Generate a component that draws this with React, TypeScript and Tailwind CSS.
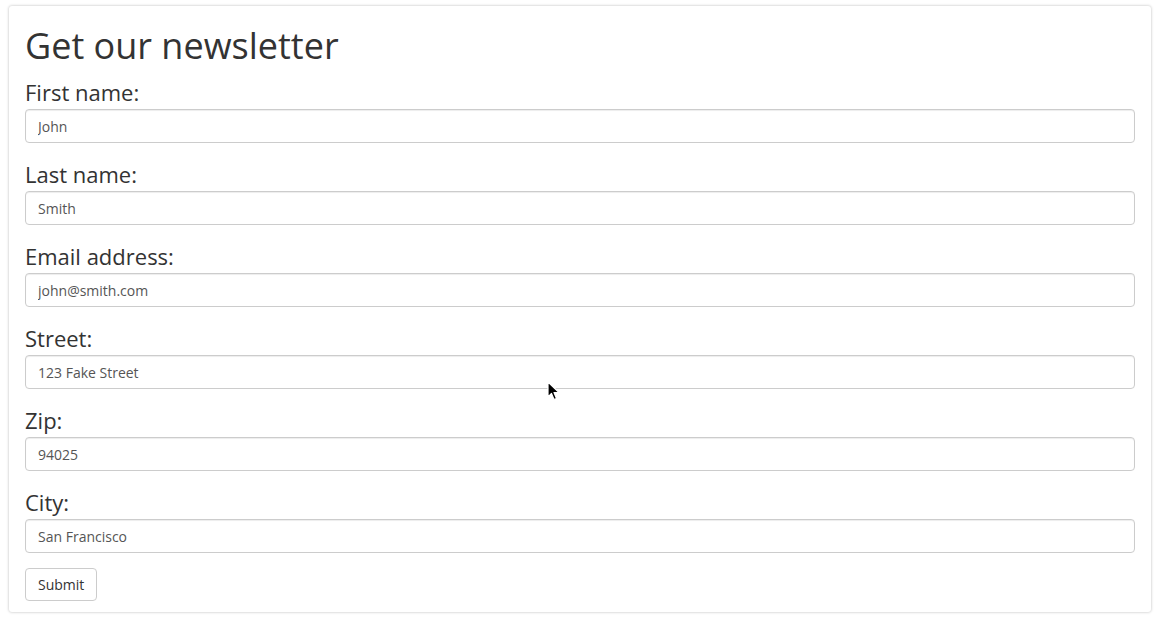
import { useState } from "react";

const fields = [
    { id: "first", label: "First name:", value: "John" },
    { id: "last", label: "Last name:", value: "Smith" },
    { id: "email", label: "Email address:", value: "john@smith.com" },
    { id: "street", label: "Street:", value: "123 Fake Street" },
    { id: "zip", label: "Zip:", value: "94025" },
    { id: "city", label: "City:", value: "San Francisco" },
];

function Cursor() {
    return (
        <svg className="absolute left-[546px] top-[381px] pointer-events-none" width="14" height="20" viewBox="0 0 14 20">
            <path d="M2 1 L2 16 L5.5 12.5 L8 18.5 L10.5 17.5 L8 11.5 L13 11.5 Z" fill="#000" stroke="#fff" strokeWidth="1.2" strokeLinejoin="round" />
        </svg>
    );
}

export default function App() {
    const [values, setValues] = useState<Record<string, string>>(
        Object.fromEntries(fields.map(f => [f.id, f.value]))
    );

    return (
        <div className="relative min-h-[624px] bg-white pl-[9px] pr-[10px] pt-[6px] text-[#333]" style={{ fontFamily: '"Open Sans", "Noto Sans", sans-serif' }}>
            <form
                onSubmit={(e) => e.preventDefault()}
                className="bg-white rounded-[3px] shadow-[0_0_3px_rgba(0,0,0,0.28)] px-[16px] pt-[20px] pb-[11px]"
            >
                <h1 className="text-[36px] leading-[40px] font-normal">Get our newsletter</h1>

                {fields.map((f, i) => (
                    <div key={f.id} className={i === 0 ? "mt-[12px]" : "mt-[17px]"}>
                        <label htmlFor={f.id} className="block text-[22px] leading-[28px] mb-[3px]">{f.label}</label>
                        <input
                            id={f.id}
                            type="text"
                            value={values[f.id]}
                            onChange={(e) => setValues({ ...values, [f.id]: e.target.value })}
                            className="block w-full h-[34px] px-[12px] text-[14px] text-[#555] bg-white border border-[#ccc] rounded-[4px] shadow-[inset_0_1px_1px_rgba(0,0,0,0.075)] outline-none"
                        />
                    </div>
                ))}

                <button
                    type="submit"
                    className="mt-[15px] h-[33px] px-[12px] text-[14px] text-[#333] bg-white border border-[#ccc] rounded-[4px]"
                >
                    Submit
                </button>
            </form>
            <Cursor />
        </div>
    );
}
